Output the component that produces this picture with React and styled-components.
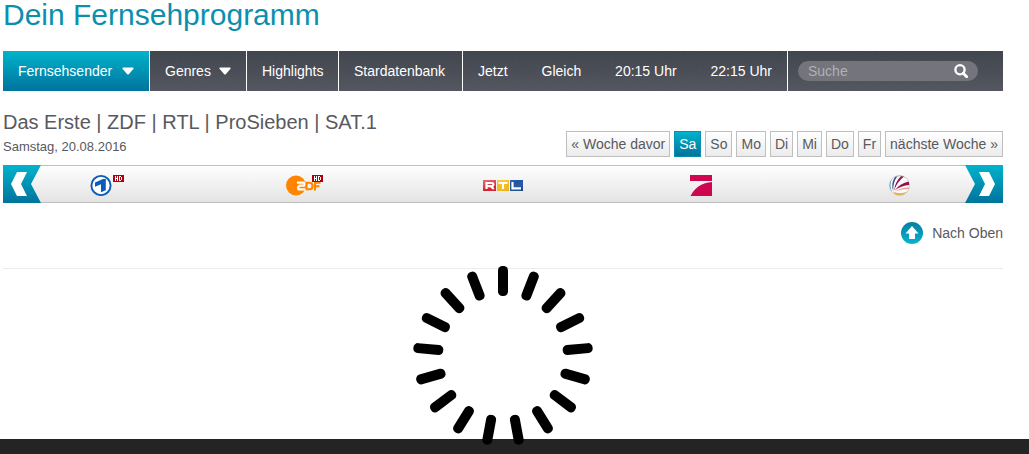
import React from 'react'
import styled, { createGlobalStyle, css } from 'styled-components'

const times = ['Jetzt', 'Gleich', '20:15 Uhr', '22:15 Uhr']
const days = ['Sa', 'So', 'Mo', 'Di', 'Mi', 'Do', 'Fr']
const bars = Array.from({ length: 17 }, (_, i) => (i * 360) / 17)

function App() {
  return (
    <>
      <GlobalStyle />
      <Page>
        <Title>Dein Fernsehprogramm</Title>

        <Nav>
          <NavLink href="#" $active $width="146px">Fernsehsender <Caret /></NavLink>
          <NavLink href="#" $width="96px">Genres <Caret /></NavLink>
          <NavLink href="#" $width="91px">Highlights</NavLink>
          <NavLink href="#" $width="123px">Stardatenbank</NavLink>
          <Times>
            {times.map((time) => (
              <a href="#" key={time}>{time}</a>
            ))}
          </Times>
          <Search>
            <input type="search" aria-label="Suche" placeholder="Suche" />
            <button type="submit" aria-label="Suchen">
              <SearchIcon />
            </button>
          </Search>
        </Nav>

        <Heading>
          <div>
            <h2>Das Erste | ZDF | RTL | ProSieben | SAT.1</h2>
            <p>Samstag, 20.08.2016</p>
          </div>
          <Week>
            <DayButton>« Woche davor</DayButton>
            {days.map((day, i) => (
              <DayButton key={day} $active={i === 0}>{day}</DayButton>
            ))}
            <DayButton>nächste Woche »</DayButton>
          </Week>
        </Heading>

        <Channels>
          <Arrow aria-label="Zurück"><ArrowShape /></Arrow>
          <ChannelList>
            <li><ArdLogo /></li>
            <li><ZdfLogo /></li>
            <li><RtlLogo /></li>
            <li><ProSiebenLogo /></li>
            <li><SatLogo /></li>
          </ChannelList>
          <Arrow aria-label="Weiter" $next><ArrowShape /></Arrow>
        </Channels>

        <ToTop href="#">
          <UpIcon />
          Nach Oben
        </ToTop>

        <Program>
          <Spinner viewBox="-90 -90 180 180" role="img" aria-label="Lädt">
            {bars.map((angle) => (
              <rect key={angle} x="-5" y="-90" width="10" height="30" rx="4.5" transform={`rotate(${angle})`} />
            ))}
          </Spinner>
        </Program>
      </Page>
      <Footer />
    </>
  )
}

export default App

function Caret() {
  return (
    <svg width="12" height="8" viewBox="0 0 12 8" fill="#fff">
      <path d="M1 0.5h10q1 .3.5 1.3L7 7q-1 1-2 0L.5 1.800Q0 .8 1 .5z" />
    </svg>
  )
}

function SearchIcon() {
  return (
    <svg width="14" height="14" viewBox="0 0 14 14" fill="none" stroke="#fff">
      <circle cx="6" cy="5.800" r="4.600" strokeWidth="2.300" />
      <path d="M9.300 9.200l3.400 3.500" strokeWidth="2.800" strokeLinecap="round" />
    </svg>
  )
}

function ArrowShape() {
  return (
    <svg width="38" height="38" viewBox="0 0 38 38">
      <defs>
        <linearGradient id="arrow" x1="0" y1="0" x2="0" y2="1">
          <stop offset="0" stopColor="#00b3cc" />
          <stop offset="1" stopColor="#00739c" />
        </linearGradient>
      </defs>
      <path d="M0 0h38L28 19l10 19H0z" fill="url(#arrow)" />
      <path d="M14 7h10l-6 12 6 12H14L8 19z" fill="#fff" />
    </svg>
  )
}

function HdBadge({ x }) {
  return (
    <g transform={`translate(${x} 1)`}>
      <rect width="11" height="7" fill="#b0000f" />
      <path d="M2.500 1v5M4.500 1v5M3 3.500h1M6.500 1v5M7 1.500h1M7 5.500h1M8.500 2v3" fill="none" stroke="#fff" strokeWidth="1" />
    </g>
  )
}

function ArdLogo() {
  return (
    <svg width="34" height="22" viewBox="0 0 34 22">
      <circle cx="11" cy="11.500" r="9.600" fill="#fff" stroke="#0d5bb8" strokeWidth="1.900" />
      <path d="M5 8.500L13 5h2.800v11.300L11 18.200V10.300l-6 2.400z" fill="#0d5bb8" />
      <HdBadge x="23" />
    </svg>
  )
}

function ZdfLogo() {
  return (
    <svg width="38" height="22" viewBox="0 0 38 22">
      <circle cx="10" cy="11.500" r="10" fill="#ff8500" />
      <path d="M11 8.700h7q1.500 1.500 0 3h-4.500q-2 1.300-1 3.600H20" fill="none" stroke="#fff" strokeWidth="2.200" />
      <path d="M20.500 8.700h3.300q2.700 0 2.700 3.300t-2.700 3.300h-3.300zM29 16.500V8.700h5.500M29 12.300h4.500" fill="none" stroke="#ff8500" strokeWidth="2.100" />
      <HdBadge x="26" />
    </svg>
  )
}

function RtlLogo() {
  return (
    <svg width="40" height="11" viewBox="0 0 40 11">
      <defs>
        <linearGradient id="gloss" x1="0" y1="0" x2="1" y2="1">
          <stop offset="0" stopColor="#fff" stopOpacity=".35" />
          <stop offset=".5" stopColor="#fff" stopOpacity="0" />
          <stop offset="1" stopColor="#000" stopOpacity=".2" />
        </linearGradient>
      </defs>
      <path d="M0 0h13v11H0z" fill="#d6212b" />
      <path d="M14 0h12v11H14z" fill="#f8bb13" />
      <path d="M27 0h13v11H27z" fill="#1c55a4" />
      <path d="M0 0h13v11H0zM14 0h12v11H14zM27 0h13v11H27z" fill="url(#gloss)" />
      <path d="M3.500 9V3h5.500q1.500.2 1.400 1.600T9 6.200H4M7.500 6.200L10.800 9M15.500 3h9M20 3v6M29.500 2v6.300H38" fill="none" stroke="#fff" strokeWidth="2.200" />
    </svg>
  )
}

function ProSiebenLogo() {
  return (
    <svg width="22" height="22" viewBox="0 0 22 22" fill="#cf0650">
      <path d="M0 1h22v6H0zM22 8v14H.5Q7 9 22 8z" />
    </svg>
  )
}

function SatLogo() {
  return (
    <svg width="22" height="22" viewBox="0 0 22 22">
      <defs>
        <clipPath id="ball"><circle cx="11.500" cy="11.500" r="10" /></clipPath>
      </defs>
      <circle cx="11.500" cy="11.500" r="10" fill="#fbfaf9" stroke="#d3cdc8" strokeWidth="1" />
      <g clipPath="url(#ball)">
        <path d="M4.500 18Q0 11 5 3L1 6v8z" fill="#4f9fc9" />
        <path d="M5.300 17Q4.500 9 9.500 2L7 3Q2.500 10 5.300 17z" fill="#3d4a8c" />
        <path d="M6 16.500Q9 8 16.500 2L13.500 1.500Q7 8 6 16.500z" fill="#8d1458" />
        <path d="M6.500 16.500Q13 11.500 21.500 11l-.8-3.500Q12.500 9 6.500 16.500z" fill="#94104f" />
        <path d="M7 17.500Q14 14.500 21 15l.5-1.500Q14 13 7 17.500z" fill="#e5a08c" />
        <path d="M5 17.500Q12 21 19.500 17.500L16 21.500H8z" fill="#e0b25d" />
        <path d="M6 3.500Q11 0 17 3" fill="none" stroke="#a9a48f" strokeWidth="1" />
      </g>
    </svg>
  )
}

function UpIcon() {
  return (
    <svg width="22" height="22" viewBox="0 0 22 22">
      <defs>
        <linearGradient id="up" x1="0" y1="0" x2="0" y2="1">
          <stop offset="0" stopColor="#067ea4" />
          <stop offset="1" stopColor="#06b4cc" />
        </linearGradient>
      </defs>
      <circle cx="11" cy="11" r="11" fill="url(#up)" />
      <path d="M11 4l6.500 7.500H14V17H8v-5.500H4.500z" fill="#fff" />
    </svg>
  )
}

const GlobalStyle = createGlobalStyle`
* {
  box-sizing: border-box;
}

body {
  margin: 0;
  background: #fff;
  color: #58595f;
  font: 14px/20px "Liberation Sans", Arial, sans-serif;
}

h1, h2, p, ul {
  margin: 0;
  padding: 0;
  font-weight: normal;
}

a {
  color: inherit;
  text-decoration: none;
}

input, button {
  font: inherit;
}
`

const tealFill = css`
background: linear-gradient(#00b3cc, #00739c);
color: #fff;
`

const Page = styled.main`
padding: 0 26px 0 3px;
`

const Title = styled.h1`
height: 51px;
color: #0a90ad;
font-size: 30px;
line-height: 30px;
`

const Nav = styled.nav`
display: flex;
height: 40px;
color: #fff;
background:
  repeating-linear-gradient(115deg, rgba(255, 255, 255, .02) 0 1px, transparent 1px 3px),
  linear-gradient(#40444c, #535660);
`

const NavLink = styled.a`
display: flex;
align-items: center;
justify-content: space-between;
flex: none;
box-sizing: content-box;
width: calc(${(props) => props.$width} - 30px);
padding: 0 15px;
border-right: 1px solid #fff;
white-space: nowrap;
${(props) => props.$active && tealFill}
`

const Times = styled.div`
display: flex;
align-items: center;
justify-content: space-between;
flex: none;
width: 325px;
padding: 0 15px;
border-right: 1px solid #fff;
`

const Search = styled.form`
display: flex;
align-items: center;
align-self: center;
width: 180px;
height: 20px;
margin-left: 10px;
padding: 0 10px;
border-radius: 10px;
background: #73747c;

input {
  flex: 1;
  min-width: 0;
  padding: 0;
  border: 0;
  outline: 0;
  background: none;
  color: #fff;
}

input::placeholder {
  color: #b0b0b6;
}

button {
  display: flex;
  padding: 0;
  border: 0;
  background: none;
  cursor: pointer;
}
`

const Heading = styled.header`
display: flex;
justify-content: space-between;
align-items: flex-end;
height: 74px;
padding-bottom: 8px;

h2 {
  font-size: 20px;
  line-height: 30px;
}

p {
  font-size: 13px;
  line-height: 20px;
}
`

const Week = styled.div`
display: flex;
gap: 4px;
`

const DayButton = styled.button`
height: 26px;
padding: 0 4px;
border: 1px solid #bfbfbf;
background: linear-gradient(#fff, #ebebeb);
color: #58595f;
white-space: nowrap;
cursor: pointer;
${(props) => props.$active && css`
  ${tealFill}
  border-color: #0a8fb0;
`}
`

const Channels = styled.section`
display: flex;
height: 38px;
background: linear-gradient(#fff, #e3e3e3);
box-shadow: inset 0 1px #bfbfbf, inset 0 -1px #bfbfbf;
`

const Arrow = styled.button`
display: flex;
flex: none;
z-index: 1;
padding: 0;
border: 0;
background: none;
cursor: pointer;
transform: ${(props) => (props.$next ? 'scaleX(-1)' : 'none')};
`

// the outer cells reach under the arrows
const ChannelList = styled.ul`
display: grid;
grid-template-columns: repeat(5, 1fr);
flex: 1;
align-items: center;
justify-items: center;
margin: 0 -33px;
padding-top: 2px;
list-style: none;

li {
  display: flex;
}
`

const ToTop = styled.a`
display: flex;
align-items: center;
justify-content: flex-end;
gap: 9px;
height: 65px;
padding-bottom: 6px;
`

const Program = styled.section`
position: relative;
min-height: 171px;
border-top: 1px solid #ececec;
`

// laid over the list while it loads, hangs a little into the footer
const Spinner = styled.svg`
position: absolute;
top: -3px;
left: 50%;
width: 180px;
height: 180px;
margin-left: -90px;
`

const Footer = styled.footer`
min-height: 15px;
background: #242424;
`
